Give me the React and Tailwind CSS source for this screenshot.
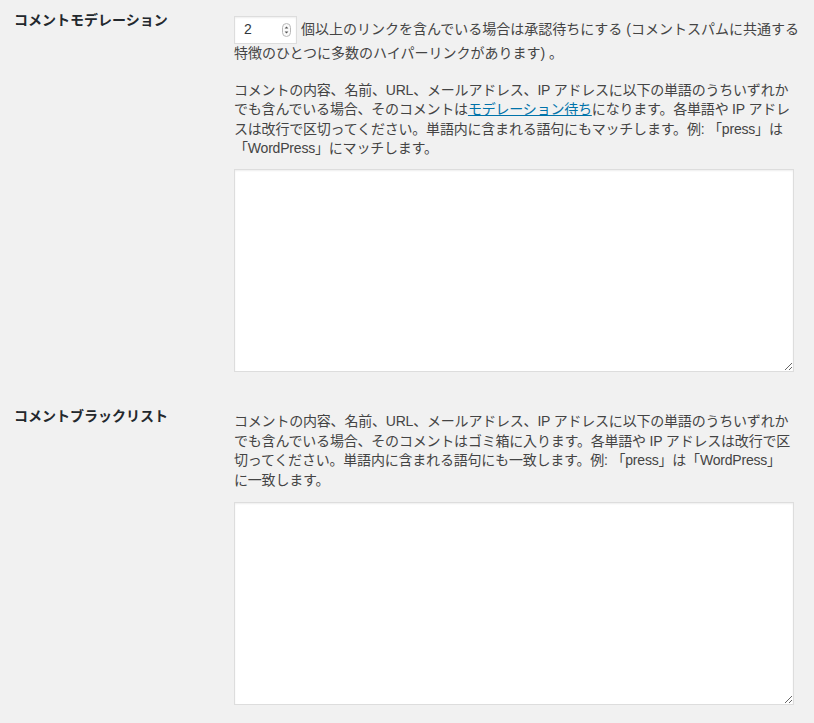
import React from "react";

function NumberInput() {
  return (
    <span className="relative inline-flex items-center align-middle w-[63px] h-[28px] border border-[#dddddd] bg-white shadow-[inset_0_1px_2px_rgba(0,0,0,0.07)] pl-[9px] text-[14px] text-[#32373c]">
      <span>2</span>
      <svg className="absolute right-[5px] top-[6px]" width="9" height="14" viewBox="0 0 9 14">
        <rect x="0.5" y="0.5" width="8" height="13" rx="4" fill="#fafafa" stroke="#b8b8b8" />
        <path d="M2.6 5.6 L4.5 3.4 L6.4 5.6 Z" fill="#555" />
        <path d="M2.6 8.4 L4.5 10.6 L6.4 8.4 Z" fill="#555" />
      </svg>
    </span>
  );
}

function Area() {
  return (
    <textarea
      className="block w-[560px] h-[203px] border border-[#dddddd] bg-white shadow-[inset_0_1px_2px_rgba(0,0,0,0.07)] outline-none"
      defaultValue=""
    />
  );
}

function Line({ children }) {
  return <span className="block whitespace-nowrap">{children}</span>;
}

export default function App() {
  return (
    <div
      className="min-h-[723px] bg-[#f1f1f1] text-[#444444] text-[14px] leading-[1.4] overflow-hidden"
      style={{ fontFamily: '"Liberation Sans", "Noto Sans CJK JP", sans-serif' }}
    >
      <div className="flex">
        <div className="w-[234px] shrink-0 pl-[14px] pt-[11px] font-semibold text-[#23282d]">
          コメントモデレーション
        </div>
        <div className="w-[560px] pt-[16px]">
          <div>
            <Line>
              <NumberInput /> 個以上のリンクを含んでいる場合は承認待ちにする (コメントスパムに共通する
            </Line>
            <Line>特徴のひとつに多数のハイパーリンクがあります) 。</Line>
          </div>
          <div className="mt-[17px] tracking-[-0.2px]">
            <Line>コメントの内容、名前、URL、メールアドレス、IP アドレスに以下の単語のうちいずれか</Line>
            <Line>
              でも含んでいる場合、そのコメントは
              <a className="text-[#0073aa] underline" href="#">モデレーション待ち</a>
              になります。各単語や IP アドレ
            </Line>
            <Line>スは改行で区切ってください。単語内に含まれる語句にもマッチします。例: 「press」は</Line>
            <Line>「WordPress」にマッチします。</Line>
          </div>
          <div className="mt-[10px]">
            <Area />
          </div>
        </div>
      </div>
      <div className="flex">
        <div className="w-[234px] shrink-0 pl-[14px] pt-[35px] font-semibold text-[#23282d]">
          コメントブラックリスト
        </div>
        <div className="w-[560px] pt-[40px] tracking-[-0.2px]">
          <Line>コメントの内容、名前、URL、メールアドレス、IP アドレスに以下の単語のうちいずれか</Line>
          <Line>でも含んでいる場合、そのコメントはゴミ箱に入ります。各単語や IP アドレスは改行で区</Line>
          <Line>切ってください。単語内に含まれる語句にも一致します。例: 「press」は「WordPress」</Line>
          <Line>に一致します。</Line>
          <div className="mt-[12px] tracking-normal">
            <Area />
          </div>
        </div>
      </div>
    </div>
  );
}
